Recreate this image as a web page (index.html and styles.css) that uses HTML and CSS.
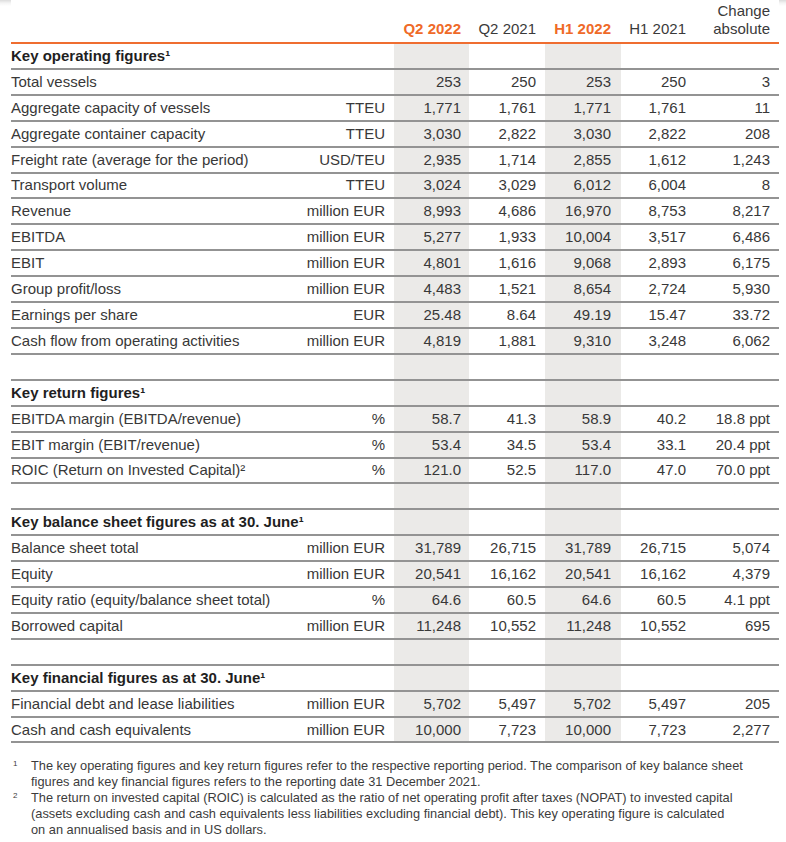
FILE: index.html
```html
<!DOCTYPE html>
<html lang="en">
<head>
<meta charset="utf-8">
<title>Key figures</title>
<link rel="stylesheet" href="styles.css">
</head>
<body>
<main class="page">
  <table class="kf">
    <colgroup>
      <col class="c-label">
      <col class="c-unit">
      <col class="c-q2a shade">
      <col class="c-q2b">
      <col class="c-h1a shade">
      <col class="c-h1b">
      <col class="c-chg">
    </colgroup>
    <thead>
      <tr>
        <th class="label"></th>
        <th class="unit"></th>
        <th class="n n1 hl">Q2 2022</th>
        <th class="n n2">Q2 2021</th>
        <th class="n n3 hl">H1 2022</th>
        <th class="n n4">H1 2021</th>
        <th class="n n5">Change<br>absolute</th>
      </tr>
    </thead>
    <tbody>
      <tr class="title"><td colspan="2">Key operating figures¹</td><td></td><td></td><td></td><td></td><td></td></tr>
      <tr><td>Total vessels</td><td class="unit"></td><td class="n n1">253</td><td class="n n2">250</td><td class="n n3">253</td><td class="n n4">250</td><td class="n n5">3</td></tr>
      <tr><td>Aggregate capacity of vessels</td><td class="unit">TTEU</td><td class="n n1">1,771</td><td class="n n2">1,761</td><td class="n n3">1,771</td><td class="n n4">1,761</td><td class="n n5">11</td></tr>
      <tr><td>Aggregate container capacity</td><td class="unit">TTEU</td><td class="n n1">3,030</td><td class="n n2">2,822</td><td class="n n3">3,030</td><td class="n n4">2,822</td><td class="n n5">208</td></tr>
      <tr><td>Freight rate (average for the period)</td><td class="unit">USD/TEU</td><td class="n n1">2,935</td><td class="n n2">1,714</td><td class="n n3">2,855</td><td class="n n4">1,612</td><td class="n n5">1,243</td></tr>
      <tr><td>Transport volume</td><td class="unit">TTEU</td><td class="n n1">3,024</td><td class="n n2">3,029</td><td class="n n3">6,012</td><td class="n n4">6,004</td><td class="n n5">8</td></tr>
      <tr><td>Revenue</td><td class="unit">million EUR</td><td class="n n1">8,993</td><td class="n n2">4,686</td><td class="n n3">16,970</td><td class="n n4">8,753</td><td class="n n5">8,217</td></tr>
      <tr><td>EBITDA</td><td class="unit">million EUR</td><td class="n n1">5,277</td><td class="n n2">1,933</td><td class="n n3">10,004</td><td class="n n4">3,517</td><td class="n n5">6,486</td></tr>
      <tr><td>EBIT</td><td class="unit">million EUR</td><td class="n n1">4,801</td><td class="n n2">1,616</td><td class="n n3">9,068</td><td class="n n4">2,893</td><td class="n n5">6,175</td></tr>
      <tr><td>Group profit/loss</td><td class="unit">million EUR</td><td class="n n1">4,483</td><td class="n n2">1,521</td><td class="n n3">8,654</td><td class="n n4">2,724</td><td class="n n5">5,930</td></tr>
      <tr><td>Earnings per share</td><td class="unit">EUR</td><td class="n n1">25.48</td><td class="n n2">8.64</td><td class="n n3">49.19</td><td class="n n4">15.47</td><td class="n n5">33.72</td></tr>
      <tr><td>Cash flow from operating activities</td><td class="unit">million EUR</td><td class="n n1">4,819</td><td class="n n2">1,881</td><td class="n n3">9,310</td><td class="n n4">3,248</td><td class="n n5">6,062</td></tr>
      <tr class="gap"><td colspan="2"></td><td></td><td></td><td></td><td></td><td></td></tr>

      <tr class="title"><td colspan="2">Key return figures¹</td><td></td><td></td><td></td><td></td><td></td></tr>
      <tr><td>EBITDA margin (EBITDA/revenue)</td><td class="unit">%</td><td class="n n1">58.7</td><td class="n n2">41.3</td><td class="n n3">58.9</td><td class="n n4">40.2</td><td class="n n5">18.8 ppt</td></tr>
      <tr><td>EBIT margin (EBIT/revenue)</td><td class="unit">%</td><td class="n n1">53.4</td><td class="n n2">34.5</td><td class="n n3">53.4</td><td class="n n4">33.1</td><td class="n n5">20.4 ppt</td></tr>
      <tr><td>ROIC (Return on Invested Capital)²</td><td class="unit">%</td><td class="n n1">121.0</td><td class="n n2">52.5</td><td class="n n3">117.0</td><td class="n n4">47.0</td><td class="n n5">70.0 ppt</td></tr>
      <tr class="gap"><td colspan="2"></td><td></td><td></td><td></td><td></td><td></td></tr>

      <tr class="title"><td colspan="2">Key balance sheet figures as at 30. June¹</td><td></td><td></td><td></td><td></td><td></td></tr>
      <tr><td>Balance sheet total</td><td class="unit">million EUR</td><td class="n n1">31,789</td><td class="n n2">26,715</td><td class="n n3">31,789</td><td class="n n4">26,715</td><td class="n n5">5,074</td></tr>
      <tr><td>Equity</td><td class="unit">million EUR</td><td class="n n1">20,541</td><td class="n n2">16,162</td><td class="n n3">20,541</td><td class="n n4">16,162</td><td class="n n5">4,379</td></tr>
      <tr><td>Equity ratio (equity/balance sheet total)</td><td class="unit">%</td><td class="n n1">64.6</td><td class="n n2">60.5</td><td class="n n3">64.6</td><td class="n n4">60.5</td><td class="n n5">4.1 ppt</td></tr>
      <tr><td>Borrowed capital</td><td class="unit">million EUR</td><td class="n n1">11,248</td><td class="n n2">10,552</td><td class="n n3">11,248</td><td class="n n4">10,552</td><td class="n n5">695</td></tr>
      <tr class="gap"><td colspan="2"></td><td></td><td></td><td></td><td></td><td></td></tr>

      <tr class="title"><td colspan="2">Key financial figures as at 30. June¹</td><td></td><td></td><td></td><td></td><td></td></tr>
      <tr><td>Financial debt and lease liabilities</td><td class="unit">million EUR</td><td class="n n1">5,702</td><td class="n n2">5,497</td><td class="n n3">5,702</td><td class="n n4">5,497</td><td class="n n5">205</td></tr>
      <tr><td>Cash and cash equivalents</td><td class="unit">million EUR</td><td class="n n1">10,000</td><td class="n n2">7,723</td><td class="n n3">10,000</td><td class="n n4">7,723</td><td class="n n5">2,277</td></tr>
    </tbody>
  </table>

  <ol class="notes">
    <li><span class="mark">1</span><p>The key operating figures and key return figures refer to the respective reporting period. The comparison of key balance sheet<br>figures and key financial figures refers to the reporting date 31 December 2021.</p></li>
    <li><span class="mark">2</span><p>The return on invested capital (ROIC) is calculated as the ratio of net operating profit after taxes (NOPAT) to invested capital<br>(assets excluding cash and cash equivalents less liabilities excluding financial debt). This key operating figure is calculated<br>on an annualised basis and in US dollars.</p></li>
  </ol>
</main>
</body>
</html>
```

FILE: styles.css
```css
html {
  background: #fff linear-gradient(to bottom, #dcdcdc 0, #f4f4f4 3px, #fff 6px) no-repeat;
}
body {
  margin: 0;
  font-family: "Liberation Sans", Arial, sans-serif;
  color: #383838;
}
.page {
  padding: 0 7px 0 11px;
}
.kf {
  border-collapse: collapse;
  table-layout: fixed;
  width: 768px;
  font-size: 15px;
  line-height: 18px;
}
.c-label { width: 276px; }
.c-unit { width: 107px; }
.c-q2a { width: 75px; }
.c-q2b { width: 76px; }
.c-h1a { width: 76px; }
.c-h1b { width: 76px; }
.c-chg { width: 82px; }
.shade { background: #ebeae8; }

.kf th {
  background: #fff;
  font-weight: normal;
  vertical-align: bottom;
  padding: 0 0 4px;
  height: 38px;
  border-bottom: 2px solid #ef6d30;
  color: #3a3a3a;
}
.kf th.hl {
  color: #ef6a28;
  font-weight: bold;
}
.kf td {
  height: 23.92px;
  padding: 0;
  border-bottom: 2px solid #939393;
  vertical-align: middle;
  white-space: nowrap;
}
.kf .unit { text-align: right; padding-right: 9px; }
.kf .n { text-align: right; }
.kf .n1 { padding-right: 8px; }
.kf .n2 { padding-right: 9px; }
.kf .n3 { padding-right: 10px; }
.kf .n4 { padding-right: 11px; }
.kf .n5 { padding-right: 9px; }
.kf tr.title td {
  font-weight: bold;
  color: #1f1f1f;
}

.notes {
  list-style: none;
  margin: 15px 0 0;
  padding: 0;
  font-size: 12.8px;
  line-height: 16px;
  color: #3c3c3c;
}
.notes li {
  display: flex;
}
.notes .mark {
  flex: 0 0 20px;
  font-size: 8px;
  line-height: 12px;
  padding-left: 2px;
  box-sizing: border-box;
}
.notes p {
  margin: 0;
}
```
